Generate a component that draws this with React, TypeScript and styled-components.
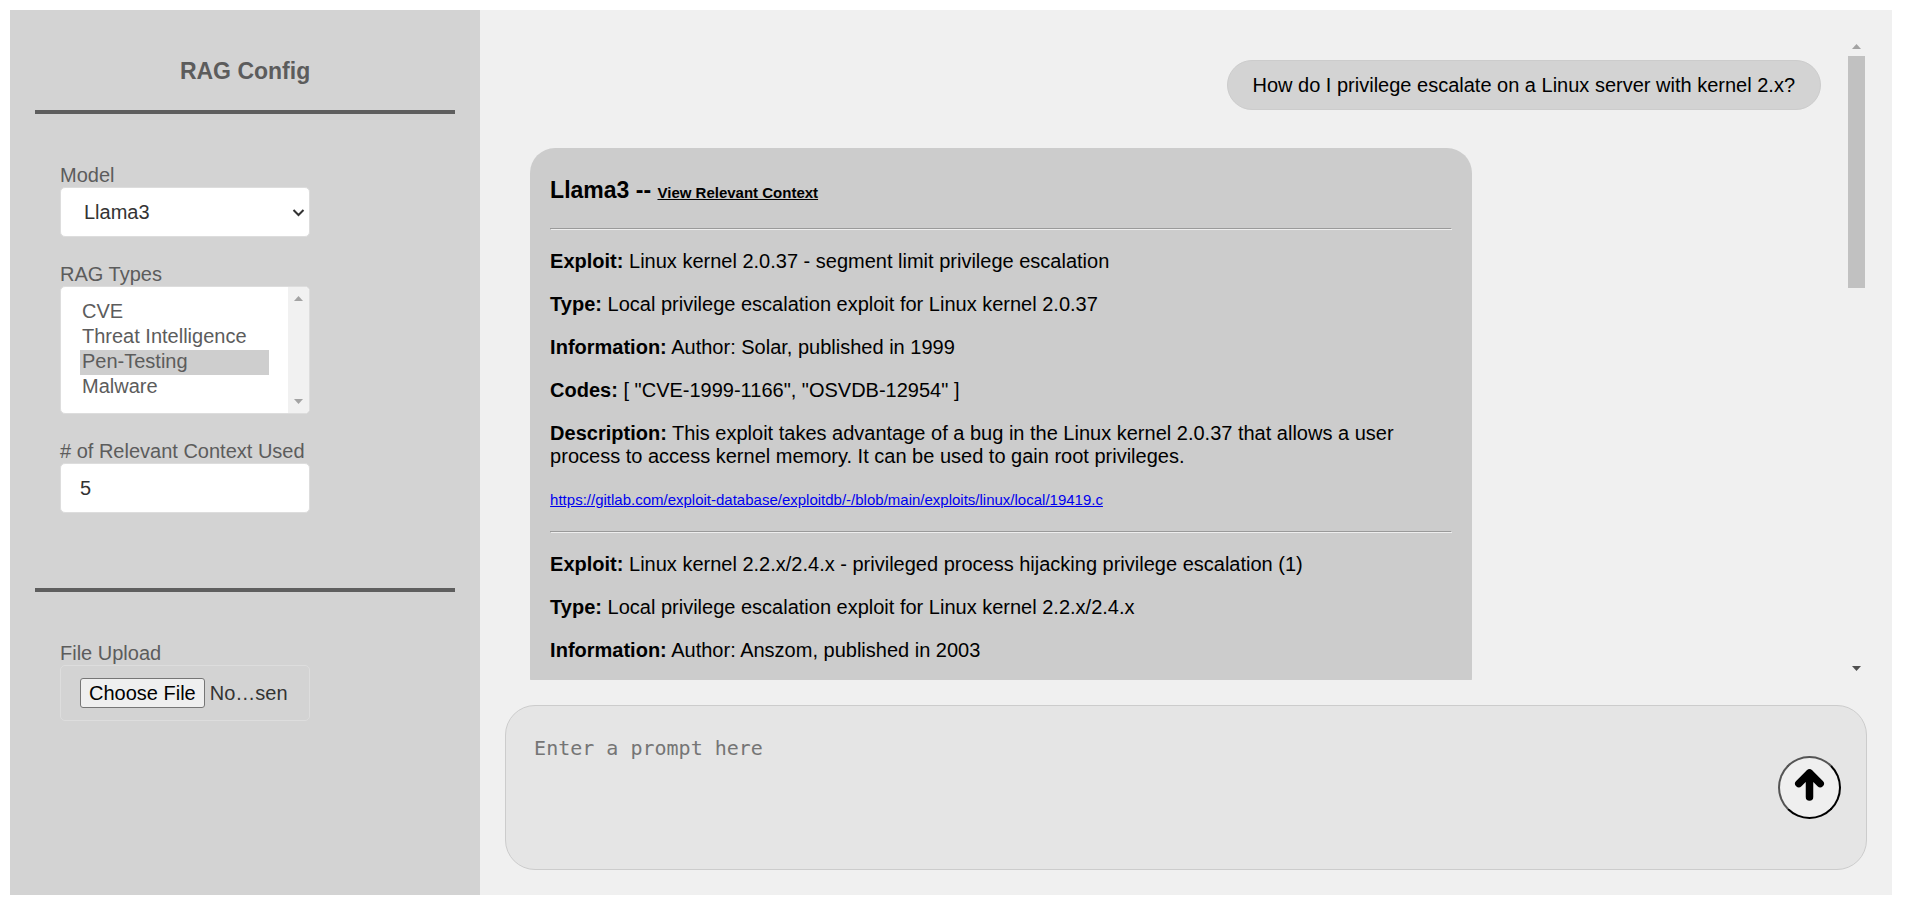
import React from "react";
import styled, { createGlobalStyle } from "styled-components";

const sans = `"Liberation Sans", Arial, sans-serif`;

const GlobalStyle = createGlobalStyle`
  *, *::before, *::after { box-sizing: border-box; }
  body {
    margin: 10px 26px 15px 10px;
    background: #ffffff;
    color: #000000;
    font: 20px/23px ${sans};
  }
`;

const Page = styled.div`
  display: flex;
  height: calc(100vh - 25px);
`;

const Sidebar = styled.aside`
  flex: 0 0 24.98%;
  padding: 0 25px;
  background: #d3d3d3;
  color: #5c5c5c;
`;

const SidebarTitle = styled.h3`
  margin: 0;
  padding: 48px 0 26px;
  font-size: 23px;
  line-height: 26px;
  text-align: center;
`;

const Divider = styled.hr`
  margin: 0;
  height: 4px;
  border: 0;
  background: #5e5e5e;
`;

const Fields = styled.div<{ $last?: boolean }>`
  display: flex;
  flex-direction: column;
  align-items: flex-start;
  gap: 25px;
  padding: 49px 25px ${(p) => (p.$last ? 0 : 75)}px;
`;

const Field = styled.div`
  display: flex;
  flex-direction: column;
  width: 250px;
  line-height: 24px;
`;

const control = `
  width: 100%;
  border: 1px solid #dddddd;
  border-radius: 5px;
  font: 20px/25px ${sans};
  color: #333333;
`;

const SelectBox = styled.div`
  position: relative;

  svg {
    position: absolute;
    top: 20px;
    right: 5px;
    pointer-events: none;
  }
`;

const ModelSelect = styled.select`
  ${control}
  display: block;
  appearance: none;
  height: 50px;
  padding: 0 23px;
  background: #ffffff;
`;

const TypesBox = styled.div`
  ${control}
  display: flex;
  height: 128px;
  overflow: hidden;
  background: #ffffff;
`;

const TypesSelect = styled.select`
  flex: 1;
  min-width: 0;
  margin: 13px 19px;
  padding: 0;
  border: 0;
  outline: 0;
  overflow: hidden;
  background: #ffffff;
  font: 20px/25px ${sans};
  color: #5c5c5c;

  option {
    height: 25px;
    min-height: 25px;
    padding: 0 2px;
    line-height: 23px;
    color: #5c5c5c;
  }
  option:checked {
    background: #cecece;
    color: #5c5c5c;
  }
`;

const NumberInput = styled.input`
  ${control}
  height: 50px;
  padding: 0 19px;
  background: #ffffff;
`;

const FileInput = styled.input`
  ${control}
  height: 56px;
  padding: 12px 19px;

  &::file-selector-button {
    height: 30px;
    margin: 0 5px 0 0;
    padding: 0 8px;
    border: 1px solid #767676;
    border-radius: 3px;
    background: #efefef;
    color: #000000;
    font: 20px/23px ${sans};
  }
`;

const Chat = styled.main`
  flex: 1;
  min-width: 0;
  display: flex;
  flex-direction: column;
  gap: 25px;
  padding: 25px;
  background: #f0f0f0;
`;

const History = styled.section`
  flex: 1;
  min-height: 0;
  display: flex;
`;

const Messages = styled.div`
  flex: 1;
  min-width: 0;
  display: flex;
  flex-direction: column;
  align-items: flex-start;
  gap: 38px;
  padding: 25px 25px 0;
  overflow: hidden;
`;

const Question = styled.div`
  align-self: flex-end;
  flex-shrink: 0;
  padding: 13px 25px 12px;
  border: 1px solid #cccccc;
  border-radius: 25px;
  background: #d3d3d3;
`;

const Answer = styled.article`
  flex-shrink: 0;
  width: 73%;
  padding: 1px 20px 20px;
  border-radius: 25px;
  background: #cccccc;

  h3 {
    margin: 29px 0 23px;
    font-size: 23px;
    line-height: 25px;
  }
  h3 a {
    color: #000000;
    font-size: 15px;
  }
  p {
    margin: 20px 0;
  }
`;

const Rule = styled.hr`
  margin: 0;
  border: 1px solid;
  border-color: #9a9a9a #eeeeee #eeeeee #9a9a9a;
`;

const SourceLink = styled.a`
  display: block;
  color: #0000ee;
  font-size: 15px;
  line-height: 23px;
`;

const Bar = styled.div<{ $track: string }>`
  flex: 0 0 21px;
  display: flex;
  flex-direction: column;
  align-items: center;
  background: ${(p) => p.$track};
`;

const BarArrow = styled.svg`
  flex: 0 0 21px;
  width: 21px;
  height: 21px;
`;

const BarSpace = styled.div`
  flex: 1;
  align-self: stretch;
  padding: 0 2px;
`;

const Thumb = styled.div`
  height: 38.5%;
  background: #c1c1c1;
`;

const Prompt = styled.form`
  display: flex;
  align-items: center;
  gap: 25px;
  height: 165px;
  padding-right: 25px;
  border: 1px solid #cccccc;
  border-radius: 30px;
  background: #e5e5e5;
`;

const PromptText = styled.textarea`
  flex: 1;
  min-width: 0;
  align-self: stretch;
  padding: 30px 0 0 28px;
  border: 0;
  outline: 0;
  resize: none;
  background: transparent;
  font: 20px/24px "DejaVu Sans Mono", monospace;

  &::placeholder { color: #757575; }
`;

const SendButton = styled.button`
  display: grid;
  place-items: center;
  width: 63px;
  height: 63px;
  padding: 0;
  border: 2px outset #000000;
  border-radius: 50%;
  background: #efefef;
`;

function ScrollBar({ track, end, thumb }: { track: string; end: string; thumb?: boolean }) {
  return (
    <Bar $track={track} aria-hidden="true">
      <BarArrow viewBox="0 0 21 21"><path d="M10.5 9 L15 14 H6 Z" fill="#a3a3a3" /></BarArrow>
      <BarSpace>{thumb && <Thumb />}</BarSpace>
      <BarArrow viewBox="0 0 21 21"><path d="M6 7 H15 L10.5 12 Z" fill={end} /></BarArrow>
    </Bar>
  );
}

type Exploit = { rows: [string, string][]; link?: string };

const exploits: Exploit[] = [
  {
    rows: [
      ["Exploit:", "Linux kernel 2.0.37 - segment limit privilege escalation"],
      ["Type:", "Local privilege escalation exploit for Linux kernel 2.0.37"],
      ["Information:", "Author: Solar, published in 1999"],
      ["Codes:", '[ "CVE-1999-1166", "OSVDB-12954" ]'],
      ["Description:", "This exploit takes advantage of a bug in the Linux kernel 2.0.37 that allows a user process to access kernel memory. It can be used to gain root privileges."],
    ],
    link: "https://gitlab.com/exploit-database/exploitdb/-/blob/main/exploits/linux/local/19419.c",
  },
  {
    rows: [
      ["Exploit:", "Linux kernel 2.2.x/2.4.x - privileged process hijacking privilege escalation (1)"],
      ["Type:", "Local privilege escalation exploit for Linux kernel 2.2.x/2.4.x"],
      ["Information:", "Author: Anszom, published in 2003"],
    ],
  },
];

export default function App() {
  return (
    <>
      <GlobalStyle />
      <Page>
        <Sidebar>
          <SidebarTitle>RAG Config</SidebarTitle>
          <Divider />
          <Fields>
            <Field>
              <label htmlFor="model">Model</label>
              <SelectBox>
                <ModelSelect id="model" defaultValue="Llama3">
                  <option>Llama3</option>
                </ModelSelect>
                <svg width="13" height="12" viewBox="0 0 13 12" fill="none" stroke="#333333" strokeWidth="2" aria-hidden="true">
                  <path d="M1.5 3L6.5 8L11.5 3" />
                </svg>
              </SelectBox>
            </Field>
            <Field>
              <label htmlFor="types">RAG Types</label>
              <TypesBox>
                <TypesSelect id="types" multiple size={4} defaultValue={["Pen-Testing"]}>
                  <option>CVE</option>
                  <option>Threat Intelligence</option>
                  <option>Pen-Testing</option>
                  <option>Malware</option>
                </TypesSelect>
                <ScrollBar track="#f1f1f1" end="#a3a3a3" />
              </TypesBox>
            </Field>
            <Field>
              <label htmlFor="count"># of Relevant Context Used</label>
              <NumberInput id="count" type="text" inputMode="numeric" defaultValue="5" />
            </Field>
          </Fields>
          <Divider />
          <Fields $last>
            <Field>
              <label htmlFor="upload">File Upload</label>
              <FileInput id="upload" type="file" />
            </Field>
          </Fields>
        </Sidebar>
        <Chat>
          <History>
            <Messages>
              <Question>How do I privilege escalate on a Linux server with kernel 2.x?</Question>
              <Answer>
                <h3>Llama3 -- <a href="#context">View Relevant Context</a></h3>
                {exploits.map((exploit, i) => (
                  <React.Fragment key={i}>
                    <Rule />
                    {exploit.rows.map(([name, value]) => (
                      <p key={name}><b>{name}</b> {value}</p>
                    ))}
                    {exploit.link && (
                      <p><SourceLink href={exploit.link}>{exploit.link}</SourceLink></p>
                    )}
                  </React.Fragment>
                ))}
              </Answer>
            </Messages>
            <ScrollBar track="#f0f0f0" end="#505050" thumb />
          </History>
          <Prompt onSubmit={(e) => e.preventDefault()}>
            <PromptText aria-label="Prompt" placeholder="Enter a prompt here" />
            <SendButton type="submit" aria-label="Send">
              <svg width="59" height="59" viewBox="0 0 59 59" fill="none" stroke="#000000" strokeWidth="7.5" strokeLinecap="round" strokeLinejoin="round">
                <path d="M29.5 39V15M18.8 25.6L29.5 14.9L40.2 25.6" />
              </svg>
            </SendButton>
          </Prompt>
        </Chat>
      </Page>
    </>
  );
}
